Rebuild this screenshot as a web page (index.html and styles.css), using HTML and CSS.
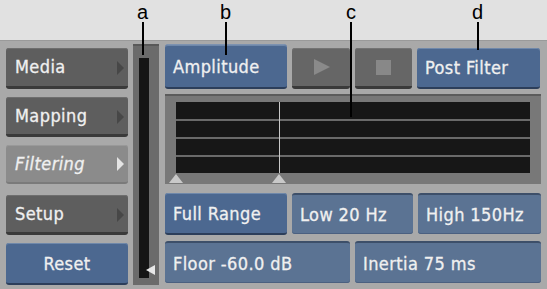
FILE: index.html
```html
<!DOCTYPE html>
<html>
<head>
  <title>Audio Filter Panel</title>
  <link rel="stylesheet" href="styles.css">
</head>
<body>
  <div class="top"></div>
  <div class="panel">
    <div class="menu">
      <div class="btn menu-btn">Media<span class="arrow"></span></div>
      <div class="btn menu-btn">Mapping<span class="arrow"></span></div>
      <div class="btn menu-btn active">Filtering<span class="arrow"></span></div>
      <div class="btn menu-btn">Setup<span class="arrow"></span></div>
      <div class="btn blue reset">Reset</div>
    </div>
    <div class="meter">
      <div class="meter-bar"></div>
      <span class="meter-mark"></span>
    </div>
    <div class="controls">
      <div class="row row-top">
        <div class="btn blue amp">Amplitude</div>
        <div class="btn transport"><span class="play"></span></div>
        <div class="btn transport"><span class="stop"></span></div>
        <div class="btn blue post">Post Filter</div>
      </div>
      <div class="graph">
        <div class="graph-area">
          <div class="grid-line"></div>
          <div class="grid-line"></div>
          <div class="grid-line"></div>
          <div class="cursor"></div>
        </div>
        <span class="handle handle-left"></span>
        <span class="handle handle-mid"></span>
      </div>
      <div class="row row-three">
        <div class="btn blue range">Full Range</div>
        <div class="btn field">Low 20 Hz</div>
        <div class="btn field">High 150Hz</div>
      </div>
      <div class="row row-two">
        <div class="btn field">Floor -60.0 dB</div>
        <div class="btn field">Inertia 75 ms</div>
      </div>
    </div>
  </div>

  <!-- callout labels -->
  <div class="callout callout-a"><span>a</span><i></i></div>
  <div class="callout callout-b"><span>b</span><i></i></div>
  <div class="callout callout-c"><span>c</span><i></i></div>
  <div class="callout callout-d"><span>d</span><i></i></div>
</body>
</html>
```

FILE: styles.css
```css
body {
  margin: 0;
  width: 547px;
  height: 289px;
  overflow: hidden;
  position: relative;
  font-family: "DejaVu Sans Condensed", "DejaVu Sans", sans-serif;
  background-color: #e1e1e1;
}

.top {
  height: 40px;
  background-color: #e1e1e1;
}

.panel {
  height: 249px;
  box-sizing: border-box;
  display: flex;
  padding: 3px 6px 4px 6px;
  background-color: #a9a9a9;
  border-top: 1px solid #9a9a9a;
}

.btn {
  box-sizing: border-box;
  height: 41px;
  border-radius: 3px;
  color: #f0f0f0;
  font-size: 18px;
  letter-spacing: 0.4px;
  -webkit-text-stroke: 0.3px #f0f0f0;
  display: flex;
  align-items: center;
  padding-left: 8px;
  position: relative;
  white-space: nowrap;
}

.menu {
  width: 122px;
  display: flex;
  flex-direction: column;
  gap: 8px;
  padding-top: 4px;
}

.menu-btn {
  background-color: #5e5e5e;
  border-bottom: 3px solid #3a3a3a;
  box-shadow: inset 0 1px 0 #6e6e6e;
  padding-left: 9px;
}

.menu-btn.active {
  background-color: #8b8b8b;
  border-bottom: 2px solid #7a7a7a;
  box-shadow: inset 0 1px 0 #999999;
  font-style: italic;
  height: 39px;
}

.arrow {
  position: absolute;
  right: 4px;
  top: 13px;
  width: 0;
  height: 0;
  border-top: 7px solid transparent;
  border-bottom: 7px solid transparent;
  border-left: 7px solid #474747;
}

.active .arrow {
  border-left-color: #e4e4e4;
  top: 12px;
}

.menu-btn:nth-child(4) {
  margin-top: 3px;
}

.blue {
  background-color: #4c6890;
  border-bottom: 2px solid #2c3e5a;
  box-shadow: inset 0 1px 0 #6f88aa;
}

.reset {
  justify-content: center;
  padding-left: 0;
  height: 42px;
}

.meter {
  width: 26px;
  margin-left: 5px;
  background-color: #6b6b6b;
  border-top: 2px solid #595959;
  position: relative;
}

.meter-bar {
  position: absolute;
  left: 6px;
  top: 12px;
  bottom: 7px;
  width: 10px;
  background-color: #151515;
}

.meter-mark {
  position: absolute;
  left: 13px;
  bottom: 10px;
  width: 0;
  height: 0;
  border-top: 5px solid transparent;
  border-bottom: 5px solid transparent;
  border-right: 9px solid #e8e8e8;
}

.controls {
  width: 376px;
  margin-left: 6px;
  display: flex;
  flex-direction: column;
}

.row {
  display: flex;
  gap: 5px;
}

.row-top {
  align-items: flex-end;
  height: 45px;
}

.amp {
  width: 122px;
  height: 45px;
  border-top: 1px solid #7d92b0;
}

.transport {
  width: 58px;
  background-color: #666666;
  border-bottom: 3px solid #3a3a3a;
  box-shadow: inset 0 1px 0 #747474;
  justify-content: center;
  padding-left: 0;
}

.transport + .transport {
  width: 57px;
}

.play {
  width: 0;
  height: 0;
  border-top: 8px solid transparent;
  border-bottom: 8px solid transparent;
  border-left: 16px solid #8a8a8a;
  margin-left: 2px;
}

.stop {
  width: 15px;
  height: 15px;
  background-color: #888888;
}

.post {
  width: 123px;
}

.graph {
  height: 90px;
  margin-top: 5px;
  background-color: #787878;
  border-top: 2px solid #5c5c5c;
  box-sizing: border-box;
  position: relative;
  padding: 6px 11px 11px 11px;
}

.graph-area {
  height: 71px;
  background-color: #171717;
  display: flex;
  flex-direction: column;
  justify-content: space-between;
  padding: 17px 0 16px 0;
  box-sizing: border-box;
  position: relative;
}

.grid-line {
  height: 2px;
  background-color: #6a6a6a;
}

.cursor {
  position: absolute;
  left: 103px;
  top: 0;
  bottom: 0;
  width: 1px;
  background-color: #c8c8c8;
}

.handle {
  position: absolute;
  bottom: 1px;
  width: 0;
  height: 0;
  border-left: 7px solid transparent;
  border-right: 7px solid transparent;
  border-bottom: 9px solid #c9c9c9;
}

.handle-left {
  left: 4px;
}

.handle-mid {
  left: 107px;
}

.row-three {
  margin-top: 9px;
}

.row-three .btn {
  width: 122px;
  height: 42px;
}

.range {
  height: 44px;
}

.field {
  background-color: #5b7393;
  border-top: 2px solid #3d4f69;
  box-shadow: inset 0 -1px 0 #4b6080;
}

.row-three .field {
  width: 121px;
  height: 41px;
}

.row-three .field:last-child {
  width: 123px;
}

.row-two {
  margin-top: 6px;
}

.row-two .field {
  width: 185px;
  height: 42px;
}

.row-two .field:last-child {
  width: 186px;
}

.callout {
  position: absolute;
  top: 2px;
  display: flex;
  flex-direction: column;
  align-items: center;
  font-family: "Liberation Sans", Arial, sans-serif;
  font-size: 20px;
  line-height: 20px;
  color: #000000;
}

.callout i {
  display: block;
  width: 2px;
  background-color: #000000;
}

.callout-a {
  left: 137px;
}

.callout-a i {
  height: 33px;
}

.callout-b {
  left: 220px;
}

.callout-b i {
  height: 33px;
}

.callout-c {
  left: 346px;
}

.callout-c i {
  height: 95px;
}

.callout-d {
  left: 472px;
}

.callout-d i {
  height: 28px;
}
```
